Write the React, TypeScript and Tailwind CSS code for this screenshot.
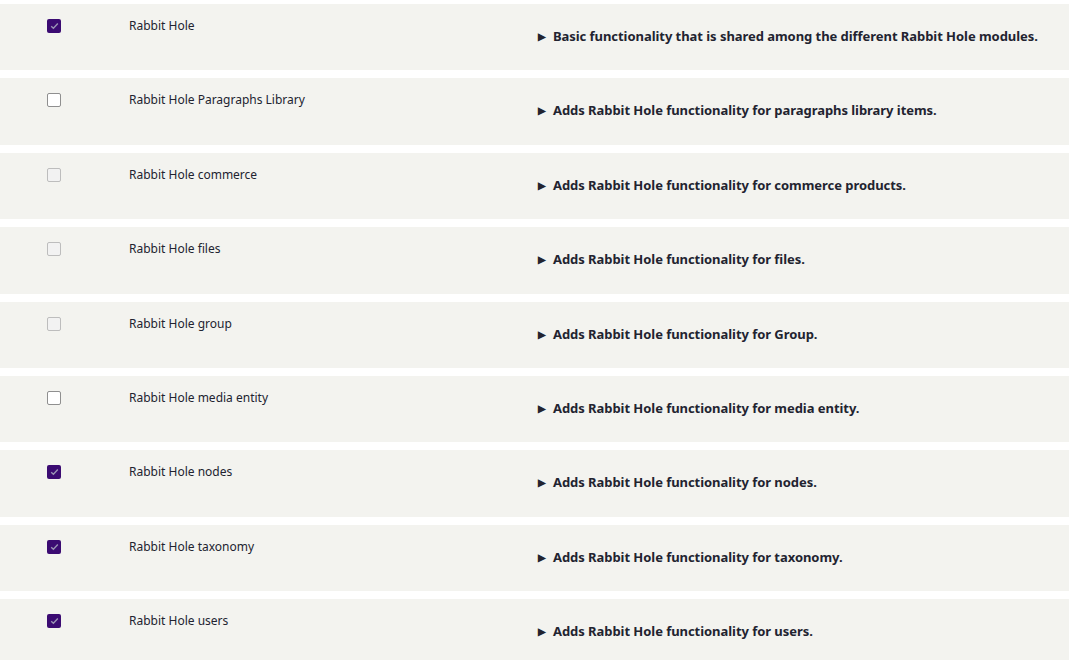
import React from "react";

type Mod = {
  name: string;
  description: string;
  state: "checked" | "unchecked" | "disabled";
};

const modules: Mod[] = [
  { name: "Rabbit Hole", description: "Basic functionality that is shared among the different Rabbit Hole modules.", state: "checked" },
  { name: "Rabbit Hole Paragraphs Library", description: "Adds Rabbit Hole functionality for paragraphs library items.", state: "unchecked" },
  { name: "Rabbit Hole commerce", description: "Adds Rabbit Hole functionality for commerce products.", state: "disabled" },
  { name: "Rabbit Hole files", description: "Adds Rabbit Hole functionality for files.", state: "disabled" },
  { name: "Rabbit Hole group", description: "Adds Rabbit Hole functionality for Group.", state: "disabled" },
  { name: "Rabbit Hole media entity", description: "Adds Rabbit Hole functionality for media entity.", state: "unchecked" },
  { name: "Rabbit Hole nodes", description: "Adds Rabbit Hole functionality for nodes.", state: "checked" },
  { name: "Rabbit Hole taxonomy", description: "Adds Rabbit Hole functionality for taxonomy.", state: "checked" },
  { name: "Rabbit Hole users", description: "Adds Rabbit Hole functionality for users.", state: "checked" }
];

function Checkbox({ state }: { state: Mod["state"] }) {
  if (state === "checked") {
    return (
      <div className="grid h-[14px] w-[14px] place-items-center rounded-[2px] bg-[#3b0b72]">
        <svg width="9" height="8" viewBox="0 0 9 8" fill="none">
          <path d="M1.2 4.2 L3.4 6.2 L7.8 1.6" stroke="#9a94b4" strokeWidth="1.4" />
        </svg>
      </div>
    );
  }
  if (state === "disabled") {
    return <div className="h-[14px] w-[14px] rounded-[2px] border border-[#bdbdbd] bg-[#f2f2f2]" />;
  }
  return <div className="h-[14px] w-[14px] rounded-[2px] border border-[#8f8f8f] bg-white" />;
}

export default function App() {
  return (
    <div className="h-[660px] w-[1069px] overflow-hidden bg-white pt-[4px] font-['Noto_Sans',sans-serif] text-[#222330]">
      <div className="flex flex-col gap-[8px]">
        {modules.map((m) => (
          <div key={m.name} className="flex h-[66.4px] shrink-0 bg-[#f3f3ef]">
            <div className="w-[129px] shrink-0 pl-[47px] pt-[15px]">
              <Checkbox state={m.state} />
            </div>
            <div className="w-[409px] shrink-0 pt-[14px] text-[12px] leading-[16px]">{m.name}</div>
            <div className="flex items-start gap-[7px] pt-[24px] text-[13px] font-bold leading-[17px] tracking-[-0.05px]">
              <span className="pt-[1px] text-[10px] leading-[15px]">▶</span>
              <span>{m.description}</span>
            </div>
          </div>
        ))}
      </div>
    </div>
  );
}
